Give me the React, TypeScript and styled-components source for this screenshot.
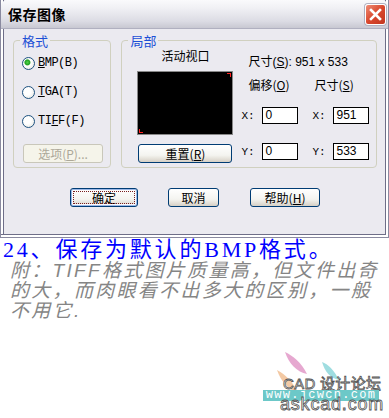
import styled, { createGlobalStyle } from "styled-components";

const GlobalStyle = createGlobalStyle`
  html, body {
    margin: 0;
    padding: 0;
    background: #ffffff;
  }
  body {
    width: 389px;
    height: 418px;
    overflow: hidden;
    font-family: "Liberation Sans", "Noto Sans CJK SC", sans-serif;
  }
`;

const UI_FONT = `"Liberation Sans", "Noto Sans CJK SC", sans-serif`;

const App = () => {
  return (
    <Page>
      <GlobalStyle />
      <Dialog>
        <TitleBar>
          <Title>保存图像</Title>
          <CloseButton>
            <svg width="13" height="13" viewBox="0 0 13 13">
              <path
                d="M2 2 L11 11 M11 2 L2 11"
                stroke="#ffffff"
                strokeWidth="2.6"
                strokeLinecap="square"
              />
            </svg>
          </CloseButton>
        </TitleBar>
        <Body>
          <Groups>
            <Group $width={99} $column>
              <Legend>格式</Legend>
              <RadioList>
                <RadioRow>
                  <Radio $checked />
                  <RadioLabel>
                    <u>B</u>MP(B)
                  </RadioLabel>
                </RadioRow>
                <RadioRow>
                  <Radio />
                  <RadioLabel>
                    <u>T</u>GA(T)
                  </RadioLabel>
                </RadioRow>
                <RadioRow>
                  <Radio />
                  <RadioLabel>
                    TI<u>F</u>F(F)
                  </RadioLabel>
                </RadioRow>
              </RadioList>
              <OptionSlot>
                <Button $width={80} $disabled>
                  选项(<u>P</u>)...
                </Button>
              </OptionSlot>
            </Group>
            <Group $width={257}>
              <Legend>局部</Legend>
              <ViewportColumn>
                <ViewportLabel>活动视口</ViewportLabel>
                <Viewport>
                  <Corner $pos="tr" />
                  <Corner $pos="bl" />
                </Viewport>
                <Button $width={94}>
                  重置(<u>R</u>)
                </Button>
              </ViewportColumn>
              <SizeColumn>
                <SizeLine>尺寸(<u>S</u>): 951 x 533</SizeLine>
                <HeaderRow>
                  <ColHead>偏移(<u>O</u>)</ColHead>
                  <ColHead>尺寸(<u>S</u>)</ColHead>
                </HeaderRow>
                <FieldRow $top={15}>
                  <Field>
                    <AxisLabel>X:</AxisLabel>
                    <Input>0</Input>
                  </Field>
                  <Field>
                    <AxisLabel>X:</AxisLabel>
                    <Input>951</Input>
                  </Field>
                </FieldRow>
                <FieldRow $top={19}>
                  <Field>
                    <AxisLabel>Y:</AxisLabel>
                    <Input>0</Input>
                  </Field>
                  <Field>
                    <AxisLabel>Y:</AxisLabel>
                    <Input>533</Input>
                  </Field>
                </FieldRow>
              </SizeColumn>
            </Group>
          </Groups>
          <ButtonRow>
            <Button $width={68} $focused>
              确定
            </Button>
            <Button $width={51}>取消</Button>
            <Button $width={70}>
              帮助(<u>H</u>)
            </Button>
          </ButtonRow>
        </Body>
      </Dialog>
      <Caption>24、保存为默认的BMP格式。</Caption>
      <Note>
        附：TIFF格式图片质量高，但文件出奇
        <br />
        的大，而肉眼看不出多大的区别，一般
        <br />
        不用它.
      </Note>
      <Watermark>
        <svg width="110" height="50" viewBox="0 0 110 50">
          <path d="M14 4 C22 8 30 14 36 26 C26 24 18 16 14 4 Z" fill="#e6a8d0" />
          <path d="M51 14 C57 16 63 22 68 32 C59 30 54 24 51 14 Z" fill="#9fdde0" />
          <path d="M6 22 C14 26 22 34 28 46 C18 42 10 34 6 22 Z" fill="#f3c9a4" />
          <path d="M36 50 C52 42 70 40 92 46 C76 52 52 52 36 50 Z" fill="#f4c28e" />
        </svg>
        <WmTitle>CAD 设计论坛</WmTitle>
        <WmBar>www.jcwcn.com</WmBar>
        <WmSite>askcad.com</WmSite>
      </Watermark>
    </Page>
  );
};

const Page = styled.div`
  position: relative;
  width: 389px;
  height: 418px;
  display: flex;
  flex-direction: column;
`;

const Dialog = styled.div`
  width: 389px;
  height: 238px;
  box-sizing: border-box;
  background: #ebeaf0;
  border: 1px solid #8a8aa0;
  border-top: none;
  box-shadow: inset -2px -2px 0 #ffffff, inset -3px -3px 0 #6e6e88,
    inset 2px 0 0 #ffffff, inset 3px 0 0 #6e6e88;
  display: flex;
  flex-direction: column;
`;

const TitleBar = styled.div`
  height: 28px;
  flex: none;
  display: flex;
  align-items: center;
  justify-content: space-between;
  padding: 0 2px 0 7px;
  background: linear-gradient(
    to bottom,
    #fafafc 0%,
    #f0f0f4 30%,
    #dcdce4 75%,
    #c8c8d2 100%
  );
  border-bottom: 1px solid #b0b0c0;
  border-radius: 6px 6px 0 0;
`;

const Title = styled.div`
  font-family: "Noto Sans CJK SC", sans-serif;
  font-weight: bold;
  font-size: 14px;
  color: #000000;
  letter-spacing: 0.5px;
`;

const CloseButton = styled.div`
  width: 21px;
  height: 21px;
  box-sizing: border-box;
  border: 1px solid #ffffff;
  border-radius: 3px;
  background: linear-gradient(135deg, #ef8d76 0%, #d9472d 50%, #c2361f 100%);
  box-shadow: 0 0 0 1px #b0b0c0;
  display: flex;
  align-items: center;
  justify-content: center;
`;

const Body = styled.div`
  flex: 1;
  display: flex;
  flex-direction: column;
  padding: 4px 11px 0 12px;
`;

const Groups = styled.div`
  display: flex;
  gap: 10px;
`;

const Group = styled.div<{ $width: number; $column?: boolean }>`
  position: relative;
  width: ${(p) => p.$width}px;
  height: 128px;
  margin-top: 7px;
  box-sizing: border-box;
  border: 1px solid #d0d0bf;
  border-radius: 4px;
  display: flex;
  flex-direction: ${(p) => (p.$column ? "column" : "row")};
  padding: 0 0 4px;
`;

/* group caption sits over the box border */
const Legend = styled.div`
  position: absolute;
  left: 6px;
  top: -8px;
  padding: 0 2px;
  background: #ebeaf0;
  font-family: "Noto Sans CJK SC", sans-serif;
  font-size: 13px;
  line-height: 15px;
  color: #1c4fd6;
`;

const RadioList = styled.div`
  display: flex;
  flex-direction: column;
  gap: 15px;
  padding: 15px 0 0 8px;
`;

const RadioRow = styled.div`
  display: flex;
  align-items: center;
  gap: 3px;
  height: 14px;
`;

const Radio = styled.span<{ $checked?: boolean }>`
  width: 13px;
  height: 13px;
  box-sizing: border-box;
  border-radius: 50%;
  border: 1px solid #1d5281;
  background: radial-gradient(
    circle at 40% 40%,
    ${(p) => (p.$checked ? "#4fd34a 0, #21a121 2.5px," : "")} #ffffff 3.5px,
    #e3e2da 100%
  );
`;

const RadioLabel = styled.span`
  font-family: "Liberation Mono", "Noto Sans CJK SC", monospace;
  font-size: 12px;
  letter-spacing: -0.5px;
  color: #000000;
`;

const OptionSlot = styled.div`
  margin-top: auto;
  padding-left: 9px;
`;

const Button = styled.div<{
  $width: number;
  $disabled?: boolean;
  $focused?: boolean;
}>`
  width: ${(p) => p.$width}px;
  height: 19px;
  box-sizing: border-box;
  border: 1px solid ${(p) => (p.$disabled ? "#c9c7ba" : "#003c74")};
  border-radius: 3px;
  background: ${(p) =>
    p.$disabled
      ? "#f5f4ea"
      : "linear-gradient(to bottom, #ffffff 0%, #f4f4f0 60%, #d6d0c5 100%)"};
  box-shadow: ${(p) =>
    p.$focused ? "inset 0 0 0 1px #9bb8e8, inset 0 0 0 2px #fbfbfb" : "none"};
  outline: ${(p) => (p.$focused ? "1px dotted #7a2020" : "none")};
  outline-offset: -4px;
  display: flex;
  align-items: center;
  justify-content: center;
  font-family: "Noto Sans CJK SC", sans-serif;
  font-size: 12px;
  color: ${(p) => (p.$disabled ? "#aca899" : "#000000")};
  u {
    text-underline-offset: 1px;
  }
`;

const ViewportColumn = styled.div`
  width: 96px;
  margin-left: 15px;
  display: flex;
  flex-direction: column;
  align-items: center;
  padding-top: 7px;
  ${Button} {
    margin-top: 9px;
  }
`;

const ViewportLabel = styled.div`
  font-family: "Noto Sans CJK SC", sans-serif;
  font-size: 12px;
  line-height: 15px;
  color: #000000;
  margin-bottom: 8px;
`;

const Viewport = styled.div`
  position: relative;
  width: 96px;
  height: 72px;
  box-sizing: border-box;
  background: #000000;
  border: 1px solid #888888;
  margin-top: auto;
`;

const Corner = styled.span<{ $pos: "tr" | "bl" }>`
  position: absolute;
  width: 3px;
  height: 3px;
  ${(p) =>
    p.$pos === "tr"
      ? "top: 1px; right: 1px; border-top: 1px solid #ff2020; border-right: 1px solid #ff2020;"
      : "bottom: 1px; left: 1px; border-bottom: 1px solid #ff2020; border-left: 1px solid #ff2020;"}
`;

const SizeColumn = styled.div`
  margin-left: 8px;
  padding-top: 14px;
  display: flex;
  flex-direction: column;
  width: 128px;
`;

const SizeLine = styled.div`
  font-family: ${UI_FONT};
  font-size: 12px;
  line-height: 15px;
  padding-left: 7px;
  color: #000000;
  white-space: pre;
`;

const HeaderRow = styled.div`
  display: flex;
  margin-top: 7px;
  padding-left: 7px;
  gap: 25px;
`;

const ColHead = styled.div`
  font-family: "Noto Sans CJK SC", sans-serif;
  font-size: 12px;
  line-height: 15px;
  color: #000000;
`;

const FieldRow = styled.div<{ $top: number }>`
  display: flex;
  gap: 14px;
  margin-top: ${(p) => p.$top}px;
`;

const Field = styled.div`
  display: flex;
  align-items: center;
  gap: 7px;
`;

const AxisLabel = styled.span`
  font-family: "Liberation Mono", monospace;
  font-size: 11px;
  color: #000000;
  width: 14px;
`;

const Input = styled.div`
  width: 36px;
  height: 17px;
  box-sizing: border-box;
  background: #ffffff;
  border: 1px solid #000000;
  padding-left: 2px;
  font-family: ${UI_FONT};
  font-size: 12px;
  line-height: 15px;
  color: #000000;
`;

const ButtonRow = styled.div`
  display: flex;
  margin-top: 20px;
  padding-left: 57px;
  gap: 30px;
  & > :nth-child(3) {
    margin-left: 1px;
  }
`;

const Caption = styled.div`
  margin: 0 0 0 3px;
  font-family: "Liberation Serif", "Noto Sans CJK SC", serif;
  font-size: 22px;
  line-height: 23px;
  letter-spacing: 2.8px;
  color: #0000ff;
  white-space: nowrap;
`;

const Note = styled.div`
  margin: 0 0 0 10px;
  font-family: "Liberation Sans", "Noto Sans CJK SC", sans-serif;
  font-style: italic;
  font-size: 19px;
  line-height: 20px;
  letter-spacing: 2.3px;
  color: #858585;
  white-space: nowrap;
`;

/* watermark logo lies over the page corner */
const Watermark = styled.div`
  position: absolute;
  right: 4px;
  bottom: 4px;
  width: 122px;
  height: 66px;
  svg {
    position: absolute;
    left: 8px;
    top: 0;
  }
`;

const WmTitle = styled.div`
  position: absolute;
  left: 20px;
  top: 28px;
  font-family: "Liberation Sans", "Noto Sans CJK SC", sans-serif;
  font-size: 15px;
  line-height: 15px;
  letter-spacing: 0.3px;
  color: #ffffff;
  -webkit-text-stroke: 0.8px #555555;
  white-space: nowrap;
`;

const WmBar = styled.div`
  position: absolute;
  left: 0;
  top: 42px;
  width: 116px;
  height: 11px;
  background: #6cc8c8;
  font-family: "Liberation Mono", monospace;
  font-size: 12px;
  line-height: 11px;
  letter-spacing: 1.3px;
  color: #ffffff;
  white-space: nowrap;
  text-align: center;
`;

const WmSite = styled.div`
  position: absolute;
  left: 17px;
  top: 47px;
  font-family: "Liberation Sans", sans-serif;
  font-size: 18px;
  line-height: 18px;
  letter-spacing: 0.8px;
  color: #ffffff;
  -webkit-text-stroke: 0.8px #555555;
  white-space: nowrap;
`;

export default App;
